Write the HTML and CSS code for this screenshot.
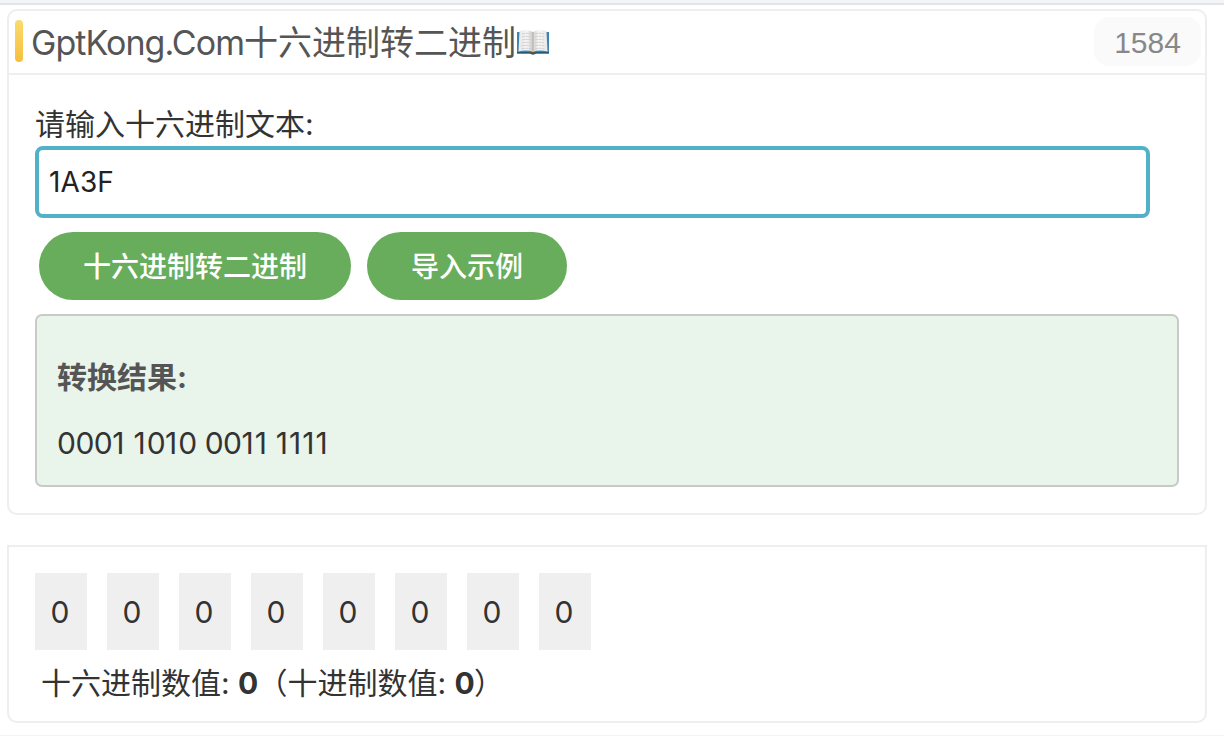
FILE: index.html
```html
<!DOCTYPE html>
<html lang="zh-CN">
<head>
<meta charset="utf-8">
<title>十六进制转二进制</title>
<link rel="stylesheet" href="styles.css">
</head>
<body>
<div class="topbar"></div>
<main class="page">
  <section class="card converter">
    <header class="card-header">
      <span class="accent"></span>
      <h1 class="title"><span class="title-latin">GptKong.Com</span>十六进制转二进制</h1>
      <svg class="book" viewBox="0 0 34 28" width="34" height="28" aria-hidden="true">
        <defs>
          <linearGradient id="left-page" x1="0" x2="1"><stop offset="0" stop-color="#e9e7e6"/><stop offset=".6" stop-color="#f7f6f5"/><stop offset="1" stop-color="#c9c7c7"/></linearGradient>
          <linearGradient id="right-page" x1="0" x2="1"><stop offset="0" stop-color="#d3d1d1"/><stop offset=".4" stop-color="#f8f7f6"/><stop offset="1" stop-color="#e9e7e6"/></linearGradient>
        </defs>
        <path d="M1 4H33V25.500H20Q17 27.500 14 25.500H1Z" fill="#3b83b5"/>
        <path d="M1 24H33V25.500H20Q17 27.500 14 25.500H1Z" fill="#245878"/>
        <path d="M14 23.500H20V25Q17 27 14 25Z" fill="#5b5538"/>
        <path d="M3.500 3Q11 .5 17 4V24Q11 21.500 2.500 23.500Z" fill="url(#left-page)"/>
        <path d="M30.500 3Q23 .5 17 4V24Q23 21.500 31.500 23.500Z" fill="url(#right-page)"/>
        <path d="M6 6Q11 4.500 15 6M6 9Q11 7.500 15 9M6 12Q11 10.500 15 12M6 15Q11 13.500 15 15M5.500 18Q11 16.500 15 18M5.500 21Q11 19.500 15 21M19 6Q23 4.500 28 6M19 9Q23 7.500 28 9M19 12Q23 10.500 28 12M19 15Q23 13.500 28 15M19 18Q23 16.500 28.500 18M19 21Q23 19.500 28.500 21" fill="none" stroke="#c4c3c5" stroke-width=".8" stroke-dasharray="3 .7"/>
        <path d="M17 4V24" stroke="#aaa8a7" stroke-width=".8"/>
      </svg>
      <span class="badge">1584</span>
    </header>
    <div class="card-body">
      <label class="label" for="hex">请输入十六进制文本:</label>
      <input class="hex-input" id="hex" type="text" value="1A3F">
      <div class="actions">
        <button class="btn" type="button">十六进制转二进制</button>
        <button class="btn" type="button">导入示例</button>
      </div>
      <div class="result">
        <h2 class="result-title">转换结果:</h2>
        <p class="result-value">000<span class="ones">1</span> <span class="ones">1</span>0<span class="ones">1</span>0 00<span class="ones">11</span> <span class="ones">1111</span></p>
      </div>
    </div>
  </section>
  <section class="card bits-card">
    <div class="bits">
      <span class="bit">0</span><span class="bit">0</span><span class="bit">0</span><span class="bit">0</span><span class="bit">0</span><span class="bit">0</span><span class="bit">0</span><span class="bit">0</span>
    </div>
    <p class="summary">十六进制数值: <b>0</b>（十进制数值: <b>0</b>）</p>
  </section>
</main>
<div class="bottom-line"></div>
</body>
</html>
```
FILE: styles.css
```css
* { box-sizing: border-box; }

body {
  margin: 0;
  height: 736px;
  overflow: hidden;
  display: flex;
  flex-direction: column;
  background: #fff;
  color: #333;
  font: 30px/42px Inter, "Noto Sans CJK SC", sans-serif;
}

h1, h2, p { margin: 0; }

.topbar {
  height: 5px;
  background: #f3f4f6;
  border-bottom: 2px solid #e3e4e9;
}

.page {
  flex: 1;
  padding: 4px 17px 0 7px;
}

.card {
  border: 2px solid #eee;
  border-radius: 10px;
}

.converter { height: 506px; }

.card-header {
  height: 64px;
  padding: 0 4px 2px 6px;
  display: flex;
  align-items: center;
  border-bottom: 2px solid #eee;
}

.accent {
  width: 8px;
  height: 42px;
  margin-right: 8px;
  border-radius: 4px;
  background: linear-gradient(#fadb6c, #f6bf3e);
}

.title {
  padding-top: 4px;
  color: #555;
  font-size: 34px;
  font-weight: 400;
  line-height: 48px;
  white-space: nowrap;
}

.title-latin {
  display: inline-block;
  width: 213px;
  letter-spacing: -0.95px;
}

.book { margin: 2px auto 0 0; }

.badge {
  width: 107px;
  height: 49px;
  border-radius: 15px;
  background: #fafafa;
  color: #888;
  font: 30px/51px "Liberation Sans", Arial, sans-serif;
  text-align: center;
}

.card-body { padding: 28px 26px 0; }

.label {
  display: block;
  height: 43px;
  line-height: 42px;
}

.hex-input {
  display: block;
  width: 1115px;
  height: 72px;
  padding: 0 10px;
  border: 4px solid #51b1c9;
  border-radius: 8px;
  outline: 0;
  background: #fff;
  color: #222;
  font: 28px Inter, sans-serif;
  letter-spacing: 0.1px;
}

.actions {
  display: flex;
  gap: 16px;
  padding: 14px 4px;
}

.btn {
  height: 68px;
  padding: 0 44px 2px;
  border: 0;
  border-radius: 34px;
  background: #68ad5c;
  color: #fff;
  font: 500 28px/66px "Noto Sans CJK SC", sans-serif;
}

.result {
  height: 173px;
  padding: 40px 20px 0;
  border: 2px solid #c8cac8;
  border-radius: 7px;
  background: #e9f4ea;
}

.result-title {
  color: #555;
  font-size: 30px;
  font-weight: 700;
  line-height: 42px;
}

.result-value {
  margin-top: 24px;
  letter-spacing: -0.5px;
}

.ones { letter-spacing: 1px; }

.bits-card {
  height: 178px;
  margin-top: 30px;
  padding: 26px;
  border-radius: 0 0 10px 10px;
}

.bits {
  display: flex;
  gap: 20px;
}

.bit {
  width: 52px;
  height: 77px;
  padding-right: 2px;
  background: #efefef;
  line-height: 79px;
  text-align: center;
}

.summary { padding: 12px 6px 0; }

.summary b { letter-spacing: -0.9px; }

.bottom-line {
  height: 1px;
  background: #f3f3f3;
}
```
